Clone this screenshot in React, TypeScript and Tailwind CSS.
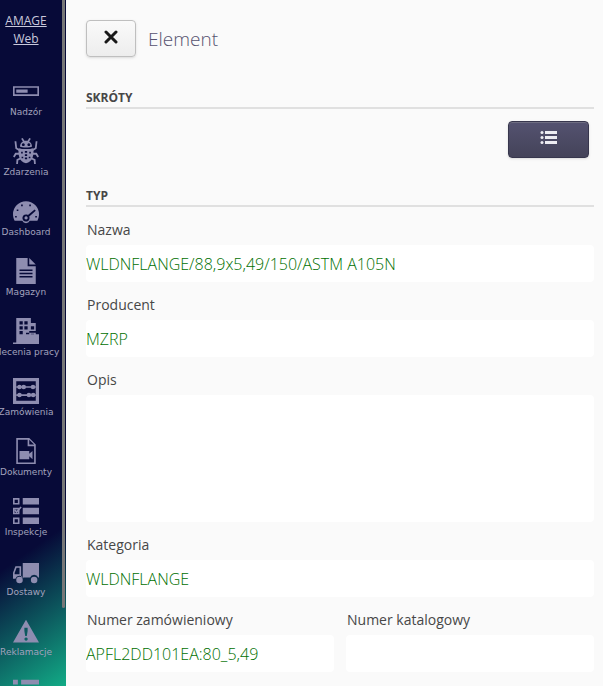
import React from 'react';

type MenuItem = {
  label: string;
  icon: React.ReactNode;
};

const MENU: MenuItem[] = [
  {
    label: 'Nadzór',
    icon: <path fillRule="evenodd" d="M0 5h16v6H0zM1 6v4h14V6zM2 7h7v2H2z" />,
  },
  {
    label: 'Zdarzenia',
    icon: (
      <>
        <path
          fillRule="evenodd"
          d="M4.3 5.3C4.3 3.6 5.2 2.7 6.1 2.2L5 .5 6 0l1 1.700h2L10 0l1 .5-1.100 1.700c.9.5 1.800 1.400 1.800 3.100-1 .8-6.400.8-7.400 0zM6.300 3.200a.9.9 0 1 0 .1 0zM9.700 3.200a.9.9 0 1 0 .1 0z"
        />
        <path
          fillRule="evenodd"
          d="M3.500 6.300C5.500 7 10.500 7 12.500 6.300c.5 3.900-.3 8.500-4.500 9.200-4.200-.7-5-5.300-4.500-9.200zM7.300 8v1h1.400V8zM7.300 10v1h1.400v-1zM7.300 12v1h1.400v-1zM5 8.500v1h1v-1zM10 8.500v1h1v-1zM5.300 11.500v1h1v-1zM9.700 11.500v1h1v-1z"
        />
        <path
          fill="none"
          stroke="currentColor"
          strokeWidth="1.1"
          d="M4 7.500 2 6.300 1.500 2M12 7.500l2-1.200.5-4.300M4 9.700H1.700L.5 11.700M12 9.700h2.300l1.200 2M4.800 12.500 2.700 13.500 2.500 16M11.200 12.500l2.100 1 .2 2.500"
        />
      </>
    ),
  },
  {
    label: 'Dashboard',
    icon: (
      <path
        fillRule="evenodd"
        d="M8 2a8 8 0 0 0-8 8c0 1.500.4 2.900 1 4h4.700a2.500 2.500 0 0 0 4.600 0H15c.6-1.100 1-2.500 1-4a8 8 0 0 0-8-8zM8 10.200c.5 0 .9.1 1.200.3L13.300 7l.7.8-4 3.600c.6 1.700-.4 3.100-2 3.100-2.900 0-2.900-4.300 0-4.300zM8 11.300a1 1 0 1 0 .1 0zM5 4h1v1H5zM10 4h1v1h-1zM2.300 7h1v1h-1zM1.300 11h1v1h-1zM13.700 11h1v1h-1z"
      />
    ),
  },
  {
    label: 'Magazyn',
    icon: <path fillRule="evenodd" d="M2 0h7v5h5v11H2zM10 0l4 4h-4zM4 7v1h8V7zM4 9v1h8V9zM4 11v1h8v-1z" />,
  },
  {
    label: 'Zlecenia pracy',
    icon: (
      <path
        fillRule="evenodd"
        d="M2 0h9v3h3v5h-4v1H8v7H0v-1h2zM4 2v2h2V2zM7 2v2h2V2zM4 5v2h2V5zM7 5v2h2V5zM11 5v2h2V5zM4 8v2h2V8zM10 10V9h4v1h2v6H8v-6zM11 10h2v-.3h-2z"
      />
    ),
  },
  {
    label: 'Zamówienia',
    icon: (
      <>
        <path fillRule="evenodd" d="M0 0h16v16H0zM2 2v12h12V2z" />
        <path d="M2 5h12v1H2zM2 10h12v1H2z" />
        <circle cx="4" cy="5.500" r="1.400" />
        <circle cx="6.600" cy="5.500" r="1.400" />
        <circle cx="12.300" cy="5.500" r="1.400" />
        <circle cx="4" cy="10.500" r="1.400" />
        <circle cx="9.800" cy="10.500" r="1.400" />
        <circle cx="12.400" cy="10.500" r="1.400" />
      </>
    ),
  },
  {
    label: 'Dokumenty',
    icon: (
      <path
        fillRule="evenodd"
        d="M2 0h8l4 4v12H2zM3 1v14h10V5H9V1zM10 1v3h3zM4 8h6v1.700L12 8v5l-2-1.700V13H4z"
      />
    ),
  },
  {
    label: 'Inspekcje',
    icon: (
      <>
        <path
          fillRule="evenodd"
          d="M6 0h10v4H6zM6 6h10v4H6zM6 12h10v4H6zM0 0h4v4H0zM1 1v2h2V1zM0 12h4v4H0zM1 13v2h2v-2z"
        />
        <path fillRule="evenodd" d="M0 6h4v4H0zM1 7v2h2V7z" />
        <path fill="none" stroke="currentColor" strokeWidth="1" d="M1 7.300 2.200 8.600 5 5.500" />
      </>
    ),
  },
  {
    label: 'Dostawy',
    icon: (
      <>
        <path d="M6 3h10v9h-.5a2.700 2.700 0 0 0-5 0H6z" />
        <path
          fillRule="evenodd"
          d="M1.500 5H5v7h1.500v.5a2.700 2.700 0 0 0-5 .3H0V9zM2.200 6 1 9.200V10h3V6z"
        />
        <circle cx="4" cy="13.500" r="2" />
        <circle cx="13" cy="13.500" r="2" />
      </>
    ),
  },
  {
    label: 'Reklamacje',
    icon: <path fillRule="evenodd" d="M8 1l8 14H0zM7 6v2l.5 3h1L9 8V6zM8 12a1 1 0 1 0 .1 0z" />,
  },
  {
    label: '',
    icon: <path d="M0 1h3v3H0zM5 1h11v3H5zM0 6h3v3H0zM5 6h11v3H5zM0 11h3v3H0zM5 11h11v3H5z" />,
  },
];

const Sidebar: React.FC = () => (
  <aside className="relative w-[66px] shrink-0 overflow-hidden bg-[linear-gradient(145deg,#070a38_0%,#070a38_78%,#12ab86_100%)]">
    <a href="#home" className="block w-[52px] pt-3 text-center text-xs leading-[18px] text-[#c9c9dc] underline">
      AMAGE Web
    </a>
    <nav className="mt-[30px] flex w-[52px] flex-col gap-[17px]">
      {MENU.map((item, idx) => (
        <a key={idx} href="#menu" className="flex flex-col items-center text-[#8e8db0]">
          <svg viewBox="0 0 16 16" className="size-[26px]" fill="currentColor" aria-hidden="true">
            {item.icon}
          </svg>
          <span className="font-['DejaVu_Sans',sans-serif] text-[9px] leading-[17px] whitespace-nowrap text-[#a2a2bd]">
            {item.label}
          </span>
        </a>
      ))}
    </nav>
    {/* Scroll thumb */}
    <div className="absolute top-0 right-px h-[608px] w-[3px] rounded-b bg-[#777]" />
  </aside>
);

const SectionTitle: React.FC<{ children: React.ReactNode }> = ({ children }) => (
  <h2 className="border-b-2 border-[#e0e0e0] text-xs leading-[18px] font-bold text-[#474747] uppercase">{children}</h2>
);

type FieldProps = {
  id: string;
  label: string;
  value?: string;
  multiline?: boolean;
};

const Field: React.FC<FieldProps> = ({ id, label, value = '', multiline }) => (
  <div className="min-w-0 flex-1 pt-[13px]">
    <label htmlFor={id} className="mb-[5px] block pl-px text-sm leading-5 text-[#474747]">
      {label}
    </label>
    {multiline ? (
      <textarea
        id={id}
        readOnly
        defaultValue={value}
        className="block h-[127px] w-full resize-none rounded bg-white text-base font-light text-[#007000] outline-none"
      />
    ) : (
      <input
        id={id}
        readOnly
        defaultValue={value}
        className="block h-[37px] w-full rounded bg-white text-base font-light text-[#007000] outline-none"
      />
    )}
  </div>
);

const App: React.FC = () => {
  return (
    <div className="flex h-screen overflow-hidden bg-[#fafafa] font-['Open_Sans',sans-serif]">
      <Sidebar />
      <main className="min-w-0 flex-1 overflow-hidden pt-5 pr-[9px] pl-5">
        <header className="flex items-center gap-3">
          <button
            type="button"
            aria-label="Zamknij"
            className="flex h-[37px] w-[50px] items-center justify-center rounded border border-[#bfbfbf] bg-linear-to-b from-[#fafafa] to-[#ededed] shadow-sm"
          >
            <svg viewBox="0 0 14 14" className="mb-1 size-[14px]" aria-hidden="true">
              <path d="M2 2l10 10M12 2L2 12" stroke="#191919" strokeWidth="3" strokeLinecap="round" />
            </svg>
          </button>
          <h1 className="text-[19px] leading-7 font-light text-[#56526f]">Element</h1>
        </header>

        <section className="mt-8">
          <SectionTitle>Skróty</SectionTitle>
          <div className="mt-3 flex justify-end pr-[5px]">
            <button
              type="button"
              aria-label="Lista"
              className="flex h-[37px] w-[81px] items-center justify-center rounded border border-[#37364d] bg-linear-to-b from-[#545270] to-[#444359] shadow-sm inset-shadow-[0_1px_0_#6f6e82]"
            >
              <svg viewBox="0 0 17 16" className="mb-1 h-4 w-[17px]" fill="#ededf2" aria-hidden="true">
                <path d="M5 1h12v3H5zM5 6h12v3H5zM5 11h12v3H5z" />
                <circle cx="2" cy="2.500" r="1.500" />
                <circle cx="2" cy="7.500" r="1.500" />
                <circle cx="2" cy="12.500" r="1.500" />
              </svg>
            </button>
          </div>
        </section>

        <section className="mt-[29px]">
          <SectionTitle>Typ</SectionTitle>
          <Field id="name" label="Nazwa" value="WLDNFLANGE/88,9x5,49/150/ASTM A105N" />
          <Field id="producer" label="Producent" value="MZRP" />
          <Field id="description" label="Opis" multiline />
          <Field id="category" label="Kategoria" value="WLDNFLANGE" />
          <div className="flex gap-3">
            <Field id="order-number" label="Numer zamówieniowy" value="APFL2DD101EA:80_5,49" />
            <Field id="catalog-number" label="Numer katalogowy" />
          </div>
        </section>
      </main>
    </div>
  );
};

export default App;
